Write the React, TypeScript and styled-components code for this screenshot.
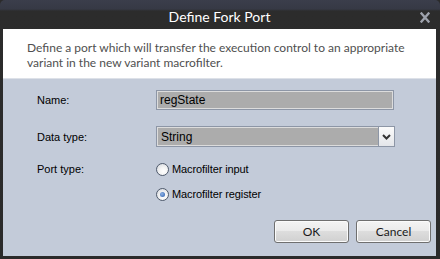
import React from "react";
import styled, { createGlobalStyle } from "styled-components";

const Global = createGlobalStyle`
  html, body { margin: 0; padding: 0; background: #2b2b2b; }
  #root { width: 440px; height: 259px; }
`;

const Frame = styled.div`
  width: 440px;
  height: 259px;
  box-sizing: border-box;
  display: flex;
  flex-direction: column;
  border-radius: 5px 5px 0 0;
  background: linear-gradient(to bottom, #3b3e4b 0px, #363945 9px, #2c2c2c 11px, #2a2a2a 100%);
  padding: 0 4px 3px 3px;
  overflow: hidden;
`;

const TitleBar = styled.div`
  height: 29px;
  flex: none;
  position: relative;
  display: flex;
  align-items: center;
  justify-content: center;
  color: #ffffff;
  font-family: Lato, "Open Sans", sans-serif;
  font-size: 14px;
  padding-top: 3px;
  box-sizing: border-box;
`;

const CloseButton = styled.div`
  position: absolute;
  right: 6px;
  top: 12px;
  width: 10px;
  height: 11px;
  display: flex;
`;

const Description = styled.div`
  height: 50px;
  flex: none;
  background: #ffffff;
  box-sizing: border-box;
  padding: 11px 0 0 24px;
  font-family: Lato, "Open Sans", sans-serif;
  font-size: 12px;
  line-height: 15px;
  color: #4f4f4f;
  white-space: nowrap;
  border-bottom: 1px solid #dde1e8;
`;

const Body = styled.div`
  flex: 1;
  background: #c3cbd9;
  display: flex;
  flex-direction: column;
  padding: 11px 5px 0 34px;
  font-family: "Liberation Sans", Arial, sans-serif;
  font-size: 11px;
  color: #000;
`;

const Row = styled.div<{ $mt: number }>`
  display: grid;
  grid-template-columns: 119px 239px;
  height: 20px;
  align-items: center;
  margin-top: ${(p) => p.$mt}px;
`;

const Label = styled.span`
  font-size: 11px;
`;

const TextBox = styled.div`
  height: 20px;
  box-sizing: border-box;
  border: 1px solid #8d96a6;
  box-shadow: inset 0 0 0 1px #dcdcdc;
  background: #acacac;
  display: flex;
  align-items: center;
  padding-left: 3px;
  font-size: 12px;
  width: 238px;
`;

const SelectBox = styled.div`
  height: 21px;
  box-sizing: border-box;
  border: 1px solid #8d96a6;
  background: #acacac;
  box-shadow: inset 0 0 0 1px #dcdcdc;
  display: flex;
  align-items: stretch;
  font-size: 12px;
  width: 239px;
`;

const SelectValue = styled.div`
  flex: 1;
  display: flex;
  align-items: center;
  padding-left: 4px;
`;

const DropButton = styled.div`
  width: 15px;
  flex: none;
  border-left: 1px solid #8d96a6;
  background: linear-gradient(to bottom, #fbfbfb, #e4e6ea);
  display: flex;
  align-items: center;
  justify-content: center;
`;

const RadioLine = styled.label`
  display: flex;
  align-items: center;
  gap: 3px;
  font-size: 11px;
  letter-spacing: -0.1px;
`;

const RadioCircle = styled.span<{ $checked?: boolean }>`
  width: 13px;
  height: 13px;
  box-sizing: border-box;
  border-radius: 50%;
  border: 1px solid #4f5a6c;
  background: radial-gradient(circle at 60% 65%, #ffffff 0%, #f4f4f4 40%, #cfd3da 100%);
  display: flex;
  align-items: center;
  justify-content: center;
  &::after {
    content: "";
    display: ${(p) => (p.$checked ? "block" : "none")};
    width: 5px;
    height: 5px;
    border-radius: 50%;
    background: radial-gradient(circle at 40% 40%, #8fb3e6, #2a5caa);
  }
`;

const ButtonBar = styled.div`
  display: flex;
  justify-content: flex-end;
  gap: 7px;
  margin-top: 16px;
`;

const Button = styled.button`
  width: 75px;
  height: 23px;
  box-sizing: border-box;
  border: 1px solid #6f6f6f;
  border-radius: 3px;
  background: linear-gradient(to bottom, #f4f4f4 0%, #ebebeb 45%, #dddddd 50%, #d0d0d0 100%);
  box-shadow: inset 0 0 0 1px #fbfbfb;
  font-family: Lato, "Open Sans", sans-serif;
  font-size: 12px;
  color: #1a1a1a;
  padding: 0;
`;

export default function App() {
  return (
    <>
      <Global />
      <Frame>
        <TitleBar>
          Define Fork Port
          <CloseButton>
            <svg width="10" height="11" viewBox="0 0 10 11">
              <path d="M1.5 1.5 L8.5 9.5 M8.5 1.5 L1.5 9.5" stroke="#9ea2ac" strokeWidth="2.4" strokeLinecap="square" fill="none" />
            </svg>
          </CloseButton>
        </TitleBar>
        <Description>
          Define a port which will transfer the execution control to an appropriate
          <br />
          variant in the new variant macrofilter.
        </Description>
        <Body>
          <Row $mt={0}>
            <Label>Name:</Label>
            <TextBox>regState</TextBox>
          </Row>
          <Row $mt={16}>
            <Label>Data type:</Label>
            <SelectBox>
              <SelectValue>String</SelectValue>
              <DropButton>
                <svg width="9" height="6" viewBox="0 0 9 6">
                  <path d="M1 1 L4.5 4.5 L8 1" stroke="#333" strokeWidth="2" fill="none" />
                </svg>
              </DropButton>
            </SelectBox>
          </Row>
          <Row $mt={13}>
            <Label>Port type:</Label>
            <RadioLine>
              <RadioCircle />
              Macrofilter input
            </RadioLine>
          </Row>
          <Row $mt={5}>
            <span />
            <RadioLine>
              <RadioCircle $checked />
              Macrofilter register
            </RadioLine>
          </Row>
          <ButtonBar>
            <Button>OK</Button>
            <Button>Cancel</Button>
          </ButtonBar>
        </Body>
      </Frame>
    </>
  );
}
